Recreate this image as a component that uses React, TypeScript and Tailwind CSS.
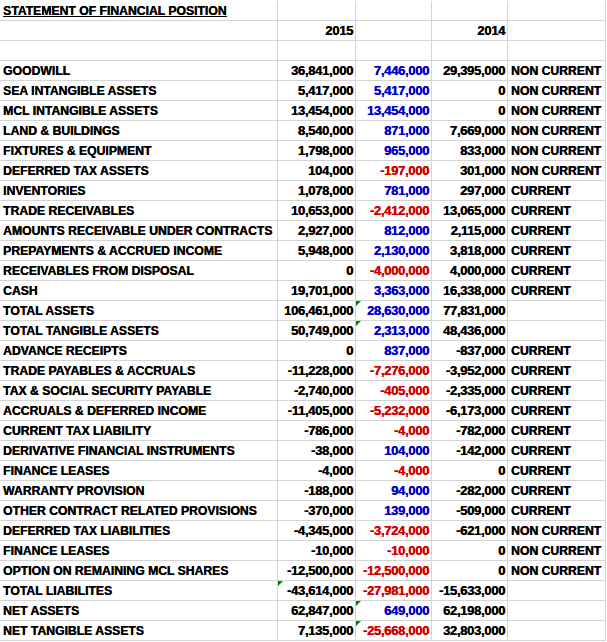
import React from 'react';

type Row = {
  label: string;
  y2015: string;
  diff: string;
  y2014: string;
  kind?: string;
  flagB?: boolean;
  flagC?: boolean;
};

const rows: Row[] = [
  { label: 'GOODWILL', y2015: '36,841,000', diff: '7,446,000', y2014: '29,395,000', kind: 'NON CURRENT' },
  { label: 'SEA INTANGIBLE ASSETS', y2015: '5,417,000', diff: '5,417,000', y2014: '0', kind: 'NON CURRENT' },
  { label: 'MCL INTANGIBLE ASSETS', y2015: '13,454,000', diff: '13,454,000', y2014: '0', kind: 'NON CURRENT' },
  { label: 'LAND & BUILDINGS', y2015: '8,540,000', diff: '871,000', y2014: '7,669,000', kind: 'NON CURRENT' },
  { label: 'FIXTURES & EQUIPMENT', y2015: '1,798,000', diff: '965,000', y2014: '833,000', kind: 'NON CURRENT' },
  { label: 'DEFERRED TAX ASSETS', y2015: '104,000', diff: '-197,000', y2014: '301,000', kind: 'NON CURRENT' },
  { label: 'INVENTORIES', y2015: '1,078,000', diff: '781,000', y2014: '297,000', kind: 'CURRENT' },
  { label: 'TRADE RECEIVABLES', y2015: '10,653,000', diff: '-2,412,000', y2014: '13,065,000', kind: 'CURRENT' },
  { label: 'AMOUNTS RECEIVABLE UNDER CONTRACTS', y2015: '2,927,000', diff: '812,000', y2014: '2,115,000', kind: 'CURRENT' },
  { label: 'PREPAYMENTS & ACCRUED INCOME', y2015: '5,948,000', diff: '2,130,000', y2014: '3,818,000', kind: 'CURRENT' },
  { label: 'RECEIVABLES FROM DISPOSAL', y2015: '0', diff: '-4,000,000', y2014: '4,000,000', kind: 'CURRENT' },
  { label: 'CASH', y2015: '19,701,000', diff: '3,363,000', y2014: '16,338,000', kind: 'CURRENT' },
  { label: 'TOTAL ASSETS', y2015: '106,461,000', diff: '28,630,000', y2014: '77,831,000', flagC: true },
  { label: 'TOTAL TANGIBLE ASSETS', y2015: '50,749,000', diff: '2,313,000', y2014: '48,436,000', flagC: true },
  { label: 'ADVANCE RECEIPTS', y2015: '0', diff: '837,000', y2014: '-837,000', kind: 'CURRENT' },
  { label: 'TRADE PAYABLES & ACCRUALS', y2015: '-11,228,000', diff: '-7,276,000', y2014: '-3,952,000', kind: 'CURRENT' },
  { label: 'TAX & SOCIAL SECURITY PAYABLE', y2015: '-2,740,000', diff: '-405,000', y2014: '-2,335,000', kind: 'CURRENT' },
  { label: 'ACCRUALS & DEFERRED INCOME', y2015: '-11,405,000', diff: '-5,232,000', y2014: '-6,173,000', kind: 'CURRENT' },
  { label: 'CURRENT TAX LIABILITY', y2015: '-786,000', diff: '-4,000', y2014: '-782,000', kind: 'CURRENT' },
  { label: 'DERIVATIVE FINANCIAL INSTRUMENTS', y2015: '-38,000', diff: '104,000', y2014: '-142,000', kind: 'CURRENT' },
  { label: 'FINANCE LEASES', y2015: '-4,000', diff: '-4,000', y2014: '0', kind: 'CURRENT' },
  { label: 'WARRANTY PROVISION', y2015: '-188,000', diff: '94,000', y2014: '-282,000', kind: 'CURRENT' },
  { label: 'OTHER CONTRACT RELATED PROVISIONS', y2015: '-370,000', diff: '139,000', y2014: '-509,000', kind: 'CURRENT' },
  { label: 'DEFERRED TAX LIABILITIES', y2015: '-4,345,000', diff: '-3,724,000', y2014: '-621,000', kind: 'NON CURRENT' },
  { label: 'FINANCE LEASES', y2015: '-10,000', diff: '-10,000', y2014: '0', kind: 'NON CURRENT' },
  { label: 'OPTION ON REMAINING MCL SHARES', y2015: '-12,500,000', diff: '-12,500,000', y2014: '0', kind: 'NON CURRENT' },
  { label: 'TOTAL LIABILITES', y2015: '-43,614,000', diff: '-27,981,000', y2014: '-15,633,000', flagB: true },
  { label: 'NET ASSETS', y2015: '62,847,000', diff: '649,000', y2014: '62,198,000', flagC: true },
  { label: 'NET TANGIBLE ASSETS', y2015: '7,135,000', diff: '-25,668,000', y2014: '32,803,000', flagC: true },
];

// gridline cell, Excel style
const cell = 'relative h-[20px] border-r border-b border-[#d4d4d4] leading-[20px] whitespace-nowrap overflow-hidden';
const num = `${cell} text-right pr-[2px] text-[13px] tracking-[-0.3px]`;
const txt = `${cell} pl-[3px] text-[12.2px]`;

function Flag() {
  return (
    <span className="absolute left-0 top-0 h-0 w-0 border-t-[5px] border-r-[5px] border-t-[#008000] border-r-transparent" />
  );
}

export default function App() {
  return (
    <div className="bg-white pt-px w-[607px] h-[642px] font-bold text-black [text-shadow:0.35px_0_0_currentColor] [font-family:'Liberation_Sans',Arial,sans-serif]">
      <div className="grid grid-cols-[278px_78px_76px_76px_98px]">
        <div className={`${txt} underline`}>STATEMENT OF FINANCIAL POSITION</div>
        <div className={cell} />
        <div className={cell} />
        <div className={cell} />
        <div className={cell} />

        <div className={cell} />
        <div className={num}>2015</div>
        <div className={cell} />
        <div className={num}>2014</div>
        <div className={cell} />

        <div className={cell} />
        <div className={cell} />
        <div className={cell} />
        <div className={cell} />
        <div className={cell} />

        {rows.map((r, i) => (
          <React.Fragment key={i}>
            <div className={txt}>{r.label}</div>
            <div className={num}>
              {r.flagB && <Flag />}
              {r.y2015}
            </div>
            <div className={`${num} ${r.diff.startsWith('-') ? 'text-[#d00000]' : 'text-[#0000c8]'}`}>
              {r.flagC && <Flag />}
              {r.diff}
            </div>
            <div className={num}>{r.y2014}</div>
            <div className={txt}>{r.kind ?? ''}</div>
          </React.Fragment>
        ))}
      </div>
    </div>
  );
}
